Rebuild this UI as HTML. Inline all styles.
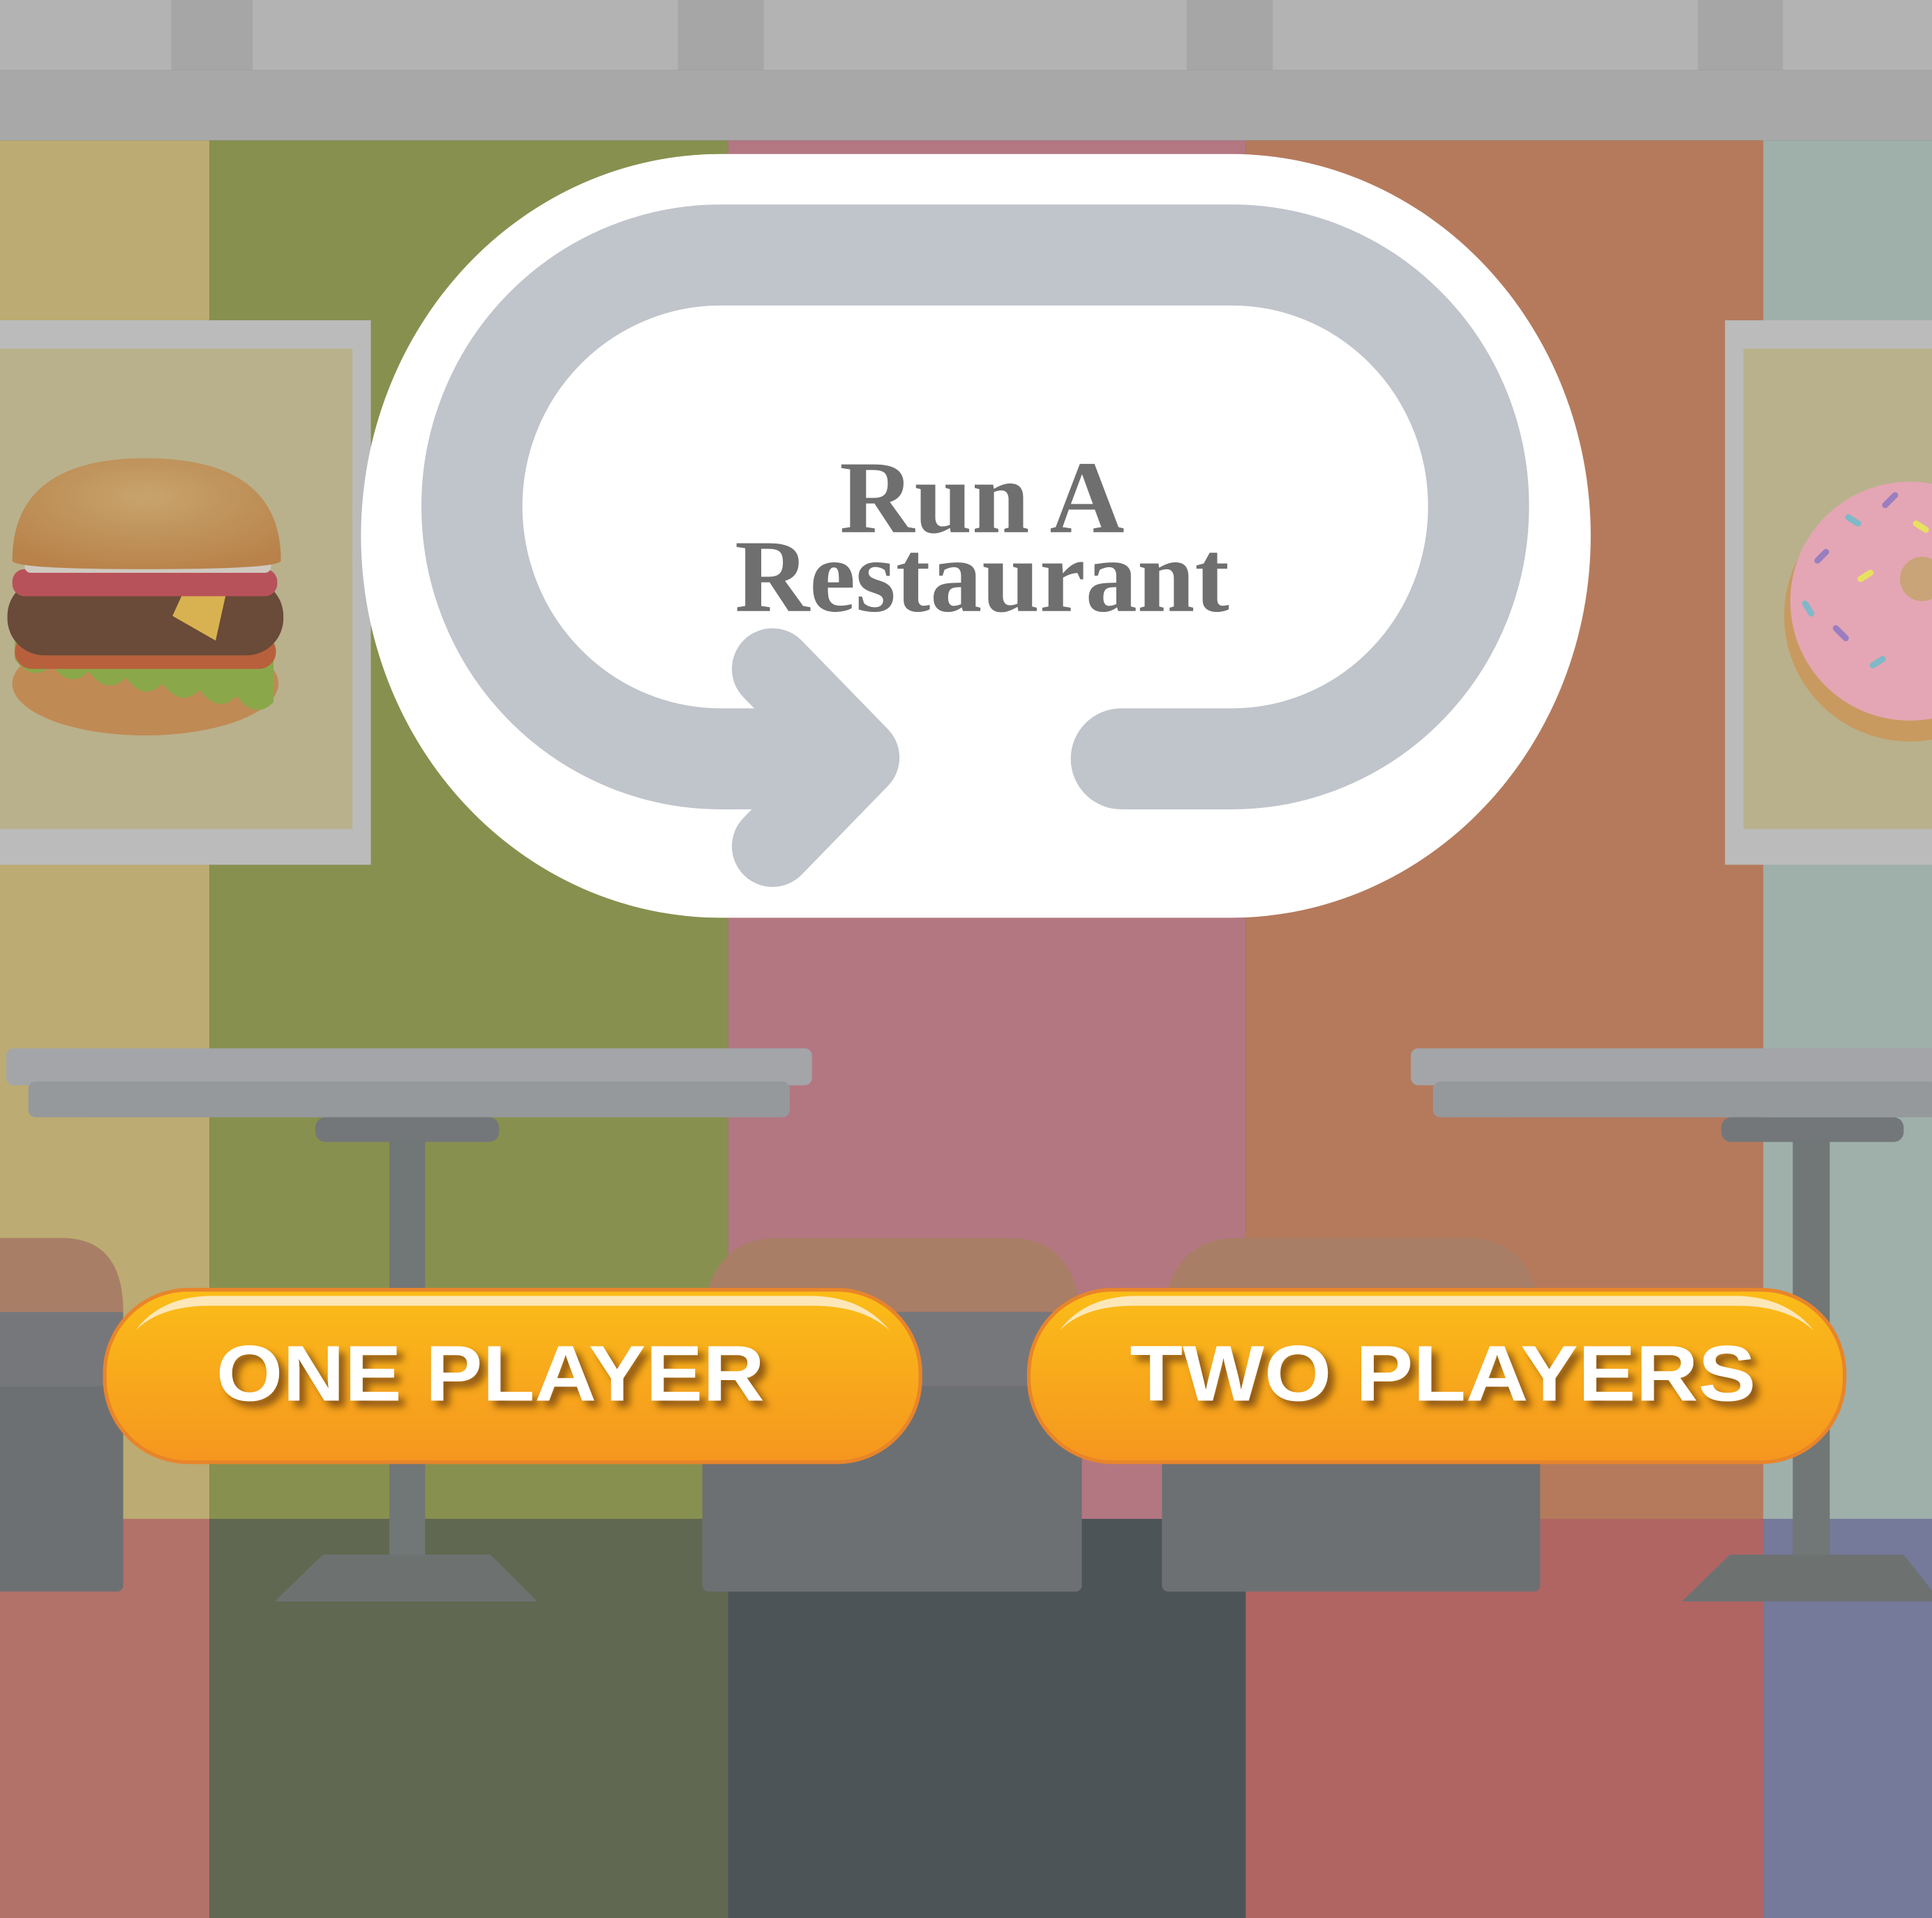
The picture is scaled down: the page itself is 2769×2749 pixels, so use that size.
<!DOCTYPE html>
<html><head><meta charset="utf-8"><style>
html,body{margin:0;padding:0;background:#4d5457}
svg{display:block}
</style></head><body>
<svg width="2769" height="2749" viewBox="0 0 1568 1557" preserveAspectRatio="none" xmlns="http://www.w3.org/2000/svg">
<defs>
<linearGradient id="btn" x1="0" y1="0" x2="0" y2="1"><stop offset="0" stop-color="#fbbd18"/><stop offset="1" stop-color="#f5961f"/></linearGradient>
<radialGradient id="bun" cx="0.5" cy="0.35" r="0.7"><stop offset="0" stop-color="#c7a46c"/><stop offset="1" stop-color="#b8824a"/></radialGradient>
<filter id="ts" x="-10%" y="-30%" width="120%" height="160%"><feDropShadow dx="5" dy="5" stdDeviation="3" flood-color="#6b3c10" flood-opacity="0.75"/></filter>
</defs>
<!-- top -->
<rect x="0" y="0" width="1568" height="57" fill="#b3b3b3"/>
<rect x="139" y="0" width="66" height="57" fill="#a6a6a6"/>
<rect x="550" y="0" width="70" height="57" fill="#a6a6a6"/>
<rect x="963" y="0" width="70" height="57" fill="#a6a6a6"/>
<rect x="1378" y="0" width="69" height="57" fill="#a6a6a6"/>
<rect x="0" y="57" width="1568" height="57" fill="#a8a8a8"/>
<!-- stripes -->
<rect x="0" y="114" width="170" height="1119" fill="#bcab72"/>
<rect x="170" y="114" width="421" height="1119" fill="#88904f"/>
<rect x="591" y="114" width="420" height="1119" fill="#b37782"/>
<rect x="1011" y="114" width="420" height="1119" fill="#b57a5c"/>
<rect x="1431" y="114" width="137" height="1119" fill="#9fb0aa"/>
<rect x="0" y="1233" width="170" height="324" fill="#b2726a"/>
<rect x="170" y="1233" width="421" height="324" fill="#616851"/>
<rect x="591" y="1233" width="420" height="324" fill="#4d5457"/>
<rect x="1011" y="1233" width="420" height="324" fill="#b06563"/>
<rect x="1431" y="1233" width="137" height="324" fill="#75799a"/>
<!-- frames -->
<rect x="0" y="260" width="301" height="442" fill="#bbbbbb"/>
<rect x="0" y="283" width="286" height="390" fill="#b9b18c"/>
<rect x="1400" y="260" width="168" height="442" fill="#bbbbbb"/>
<rect x="1415" y="283" width="153" height="390" fill="#b9b18c"/>
<!-- burger -->
<ellipse cx="118" cy="555" rx="108" ry="42" fill="#c08a55"/>
<path d="M12,535 q15,20 30,5 q15,20 30,5 q15,20 30,5 q15,20 30,5 q15,20 30,5 q15,20 30,5 q15,20 30,5 L222,520 L12,520Z" fill="#8aa84a"/>
<rect x="12" y="515" width="212" height="28" rx="14" fill="#b8603c"/>
<rect x="6" y="470" width="224" height="62" rx="30" fill="#6a4a38"/>
<path d="M150,478 L185,475 L175,520 L140,500Z" fill="#d8b250"/>
<rect x="10" y="462" width="215" height="22" rx="10" fill="#b8525a"/>
<rect x="20" y="455" width="200" height="10" rx="5" fill="#d0c8c0"/>
<path d="M10,455 Q10,372 118,372 Q228,372 228,455 Q228,462 118,462 Q10,462 10,455Z" fill="url(#bun)"/>
<!-- donut -->
<circle cx="1550" cy="500" r="102" fill="#c89a60"/>
<circle cx="1550" cy="488" r="97" fill="#e4a6b4"/>
<circle cx="1560" cy="470" r="18" fill="#c8a478"/>
<g stroke-width="5" stroke-linecap="round">
<line x1="1475" y1="455" x2="1482" y2="448" stroke="#9a7ec0"/>
<line x1="1500" y1="420" x2="1508" y2="425" stroke="#7fb8c8"/>
<line x1="1490" y1="510" x2="1498" y2="518" stroke="#9a7ec0"/>
<line x1="1520" y1="540" x2="1528" y2="535" stroke="#7fb8c8"/>
<line x1="1530" y1="410" x2="1538" y2="402" stroke="#9a7ec0"/>
<line x1="1465" y1="490" x2="1470" y2="498" stroke="#7fb8c8"/>
<line x1="1555" y1="425" x2="1563" y2="430" stroke="#e8e060"/>
<line x1="1510" y1="470" x2="1518" y2="465" stroke="#e8e060"/>
</g>
<!-- white pill -->
<rect x="293" y="125" width="998" height="620" rx="292" ry="310" fill="#ffffff"/>
<!-- loop -->
<path d="M610,616 H585 A202,205 0 0 1 383,411 A202,204 0 0 1 585,207 H1000 A200,204 0 0 1 1200,411 A200,205 0 0 1 1000,616 H910" fill="none" stroke="#c0c4cb" stroke-width="82" stroke-linecap="round"/>
<path d="M627,543 L697,615 L627,687" fill="none" stroke="#c0c4cb" stroke-width="66" stroke-linecap="round" stroke-linejoin="round"/>
<text x="797" y="432" text-anchor="middle" font-family="Liberation Serif, serif" font-weight="bold" font-size="84" fill="#6f6f6f">Run A</text>
<text x="797" y="496" text-anchor="middle" font-family="Liberation Serif, serif" font-weight="bold" font-size="84" fill="#6f6f6f">Restaurant</text>
<!-- tables -->
<rect x="5" y="851" width="654" height="30" rx="6" fill="#a3a5a8"/>
<rect x="23" y="878" width="618" height="29" rx="6" fill="#95999c"/>
<rect x="256" y="907" width="149" height="20" rx="8" fill="#737779"/>
<rect x="316" y="925" width="29" height="340" fill="#717677"/>
<path d="M262,1262 H398 L436,1300 H223Z" fill="#6d7271"/>
<rect x="1145" y="851" width="430" height="30" rx="6" fill="#a3a5a8"/>
<rect x="1163" y="878" width="410" height="29" rx="6" fill="#95999c"/>
<rect x="1397" y="907" width="148" height="20" rx="8" fill="#737779"/>
<rect x="1455" y="925" width="30" height="340" fill="#717677"/>
<path d="M1404,1262 H1545 L1575,1300 H1365Z" fill="#6d7271"/>
<!-- chairs -->
<path d="M-10,1065 V1005 H50 Q100,1005 100,1065Z" fill="#a97e66"/>
<rect x="-10" y="1065" width="110" height="60" fill="#76777b"/>
<rect x="-10" y="1125" width="110" height="167" rx="5" fill="#6d7073"/>
<path d="M570,1065 Q580,1005 630,1005 H820 Q870,1005 878,1065Z" fill="#a97e66"/>
<rect x="570" y="1065" width="308" height="60" fill="#76777b"/>
<rect x="570" y="1125" width="308" height="167" rx="5" fill="#6d7073"/>
<path d="M943,1065 Q953,1005 1003,1005 H1192 Q1242,1005 1250,1065Z" fill="#a97e66"/>
<rect x="943" y="1065" width="307" height="60" fill="#76777b"/>
<rect x="943" y="1125" width="307" height="167" rx="5" fill="#6d7073"/>
<!-- buttons -->
<rect x="85" y="1047" width="662" height="140" rx="68" fill="url(#btn)" stroke="#e8852a" stroke-width="3"/>
<path d="M110,1080 Q130,1053 170,1052 H660 Q700,1053 722,1080 Q700,1060 660,1060 H170 Q130,1060 110,1080Z" fill="#fde7b8"/>
<text x="398" y="1137" text-anchor="middle" font-family="Liberation Sans, sans-serif" font-weight="bold" font-size="64" fill="#ffffff" filter="url(#ts)" textLength="445" lengthAdjust="spacingAndGlyphs">ONE PLAYER</text>
<rect x="835" y="1047" width="662" height="140" rx="68" fill="url(#btn)" stroke="#e8852a" stroke-width="3"/>
<path d="M860,1080 Q880,1053 920,1052 H1410 Q1450,1053 1472,1080 Q1450,1060 1410,1060 H920 Q880,1060 860,1080Z" fill="#fde7b8"/>
<text x="1171" y="1137" text-anchor="middle" font-family="Liberation Sans, sans-serif" font-weight="bold" font-size="64" fill="#ffffff" filter="url(#ts)" textLength="508" lengthAdjust="spacingAndGlyphs">TWO PLAYERS</text>
</svg>
</body></html>
